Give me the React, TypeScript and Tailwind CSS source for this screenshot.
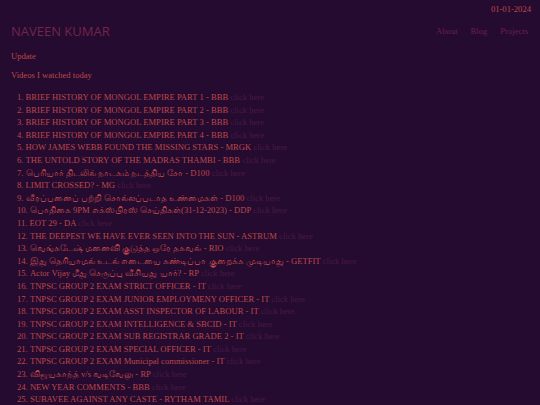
import React from "react";

type Video = {
  title: string;
  channel: string;
};

const videos: Video[] = [
  { title: "BRIEF HISTORY OF MONGOL EMPIRE PART 1", channel: "BBB" },
  { title: "BRIEF HISTORY OF MONGOL EMPIRE PART 2", channel: "BBB" },
  { title: "BRIEF HISTORY OF MONGOL EMPIRE PART 3", channel: "BBB" },
  { title: "BRIEF HISTORY OF MONGOL EMPIRE PART 4", channel: "BBB" },
  { title: "HOW JAMES WEBB FOUND THE MISSING STARS", channel: "MRGK" },
  { title: "THE UNTOLD STORY OF THE MADRAS THAMBI", channel: "BBB" },
  { title: "பெரியார் திடலில் நாடகம் நடத்திய சோ", channel: "D100" },
  { title: "LIMIT CROSSED?", channel: "MG" },
  { title: "வீரப்பனைப் பற்றி சொல்லப்படாத உண்மைகள்", channel: "D100" },
  { title: "பொதிகை 9PM எக்ஸ்பிரஸ் செய்திகள்(31-12-2023)", channel: "DDP" },
  { title: "EOT 29", channel: "DA" },
  { title: "THE DEEPEST WE HAVE EVER SEEN INTO THE SUN", channel: "ASTRUM" },
  { title: "வெங்கடேஷ் மனைவி குடுத்த ஒரே தகவல்", channel: "RIO" },
  { title: "இது தெரியாமல் உடல் எடையை கண்டிப்பா குறைக்க முடியாது", channel: "GETFIT" },
  { title: "Actor Vijay மீது செருப்பு வீசியது யார்?", channel: "RP" },
  { title: "TNPSC GROUP 2 EXAM STRICT OFFICER", channel: "IT" },
  { title: "TNPSC GROUP 2 EXAM JUNIOR EMPLOYMENY OFFICER", channel: "IT" },
  { title: "TNPSC GROUP 2 EXAM ASST INSPECTOR OF LABOUR", channel: "IT" },
  { title: "TNPSC GROUP 2 EXAM INTELLIGENCE & SBCID", channel: "IT" },
  { title: "TNPSC GROUP 2 EXAM SUB REGISTRAR GRADE 2", channel: "IT" },
  { title: "TNPSC GROUP 2 EXAM SPECIAL OFFICER", channel: "IT" },
  { title: "TNPSC GROUP 2 EXAM Municipal commissioner", channel: "IT" },
  { title: "விஜயகாந்த் v/s வடிவேலு", channel: "RP" },
  { title: "NEW YEAR COMMENTS", channel: "BBB" },
  { title: "SUBAVEE AGAINST ANY CASTE", channel: "RYTHAM TAMIL" },
];

const App: React.FC = () => {
  return (
    <div className="min-h-screen bg-[#250b30] font-['Liberation_Serif',serif] text-[#bd4749]">
      <div className="flex justify-end px-[9px] pt-[3px] text-[8.6px] leading-[12px]">
        01-01-2024
      </div>

      <header className="flex items-center justify-between pl-[11px] pr-[12px] pt-[8px]">
        <h1 className="font-['Open_Sans',sans-serif] text-[13px] leading-[16px] text-[#72244e]">
          NAVEEN KUMAR
        </h1>
        <nav className="flex gap-[13px] text-[8.6px] leading-[12px] text-[#652050]">
          <a href="#">About</a>
          <a href="#">Blog</a>
          <a href="#">Projects</a>
        </nav>
      </header>

      <div className="px-[11px] pt-[11px] text-[8.6px]">
        <p className="leading-[12px]">Update</p>
        <p className="mt-[7px] leading-[12px]">Videos I watched today</p>
      </div>

      <ol className="list-inside list-decimal pl-[17px] pt-[10px] text-[8.6px] leading-[12.6px]">
        {videos.map((v, i) => (
          <li key={i}>
            {v.title} - {v.channel}{" "}
            <a href="#" className="text-[#4a1944]">
              click here
            </a>
          </li>
        ))}
      </ol>
    </div>
  );
};

export default App;
